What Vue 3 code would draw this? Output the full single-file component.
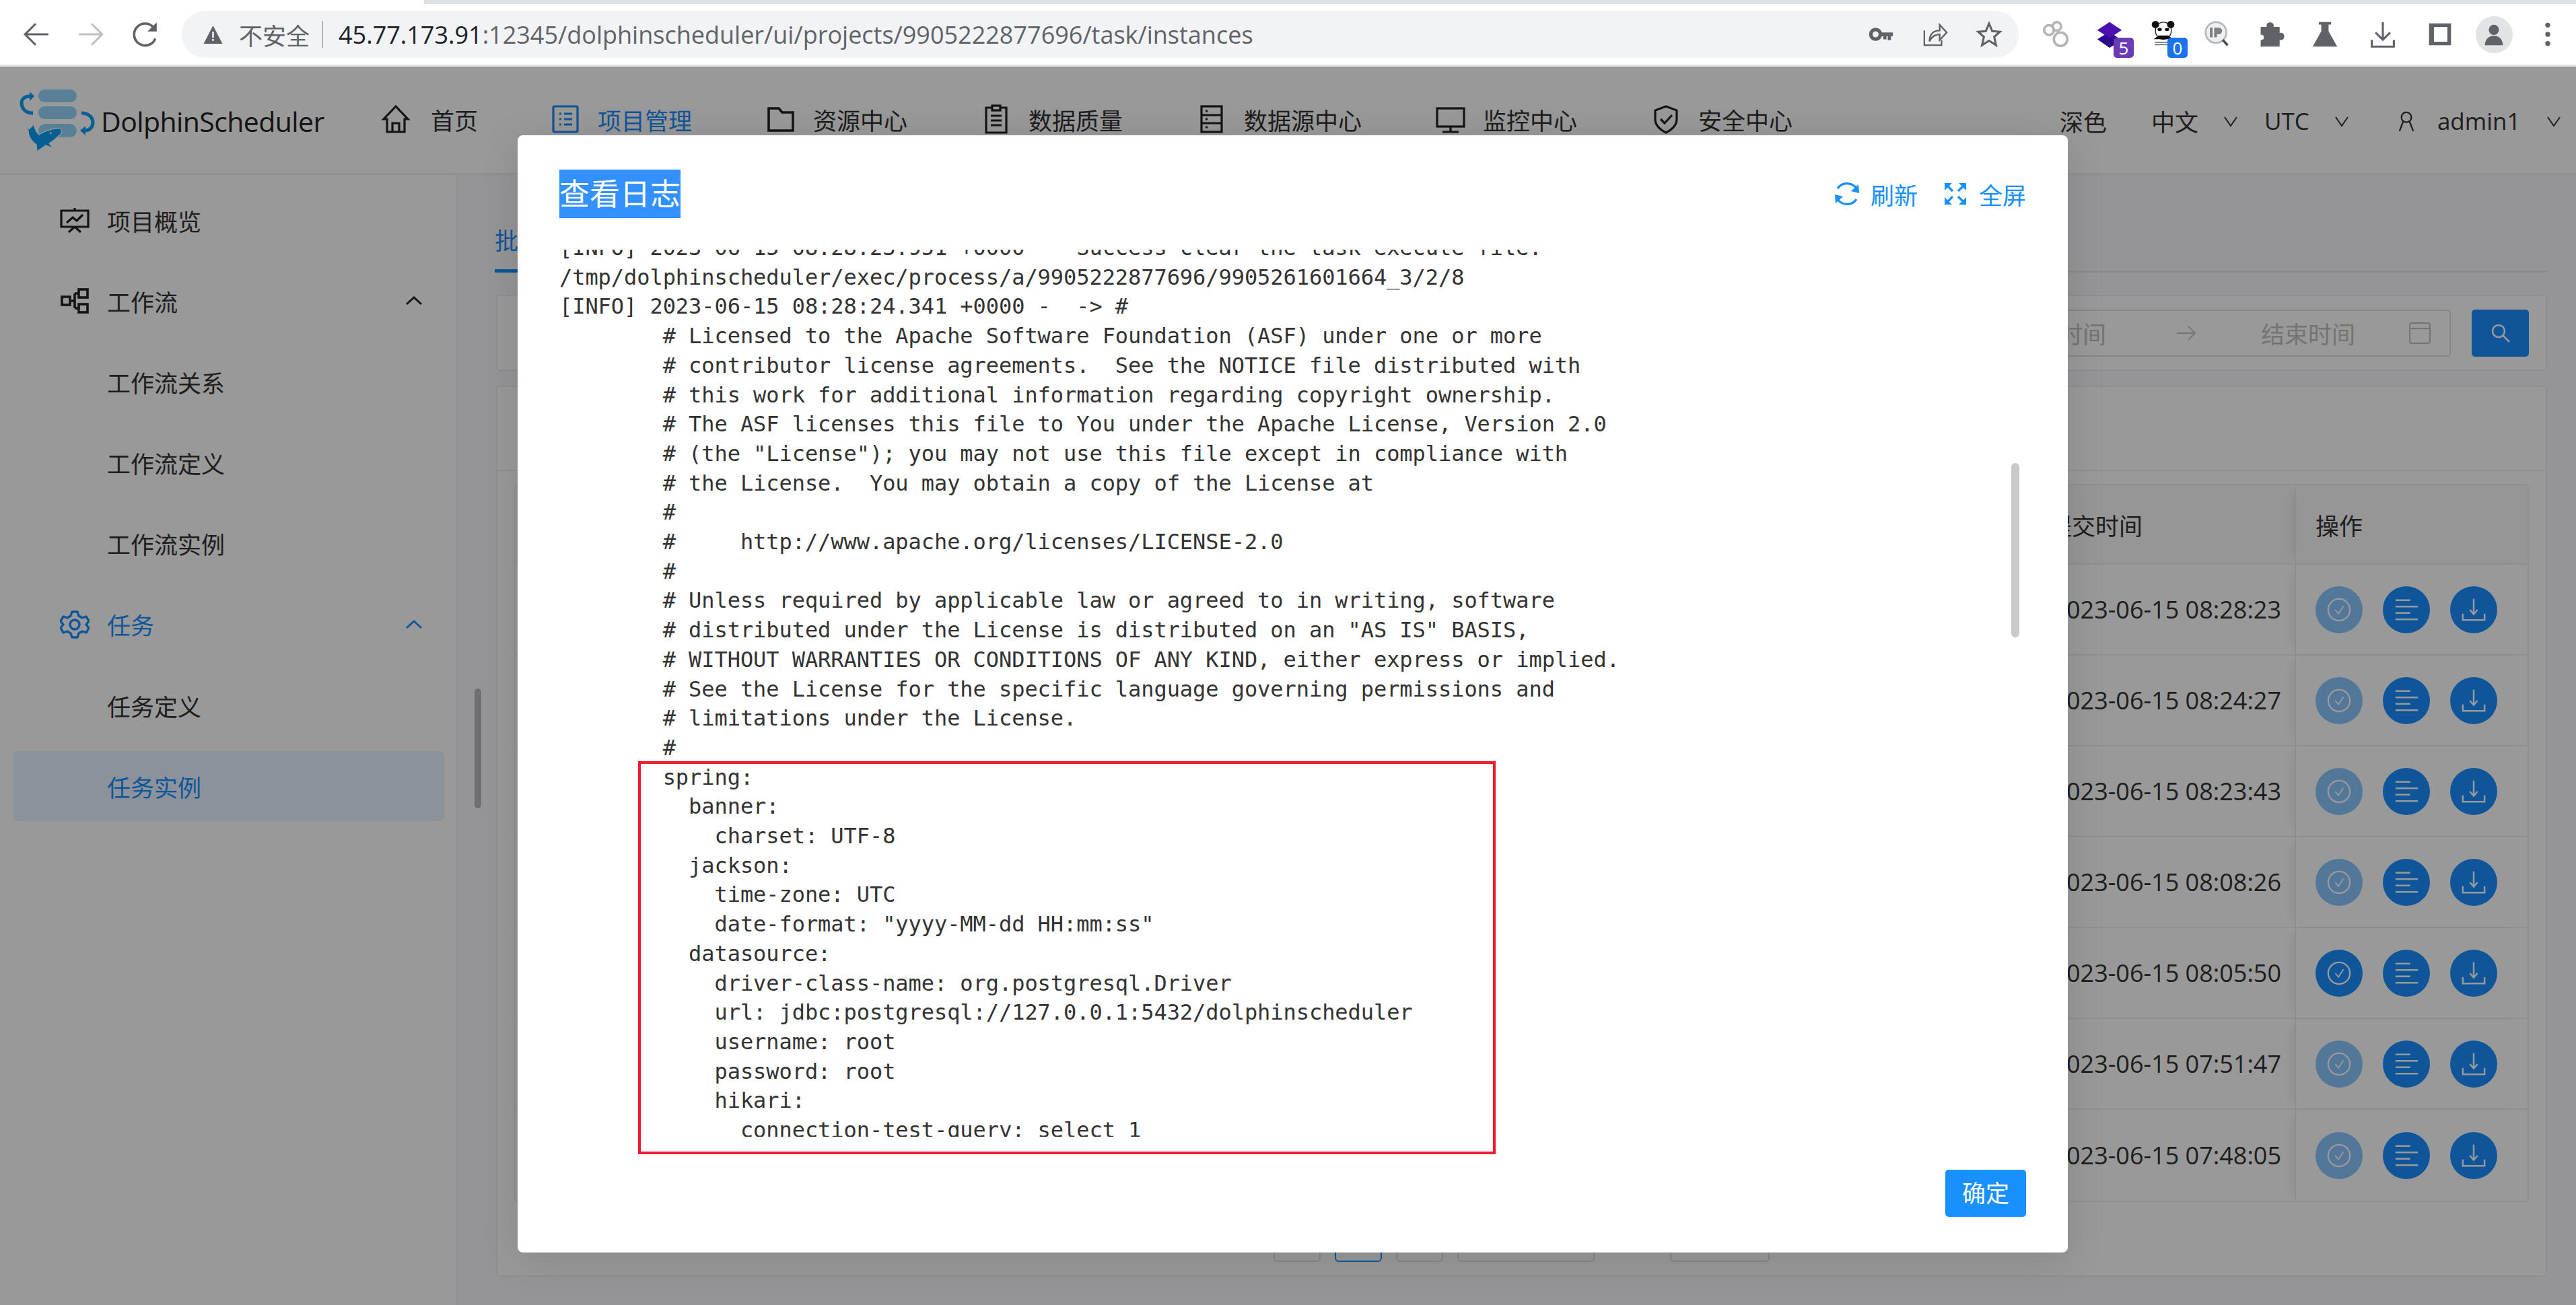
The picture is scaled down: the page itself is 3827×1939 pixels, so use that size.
<script setup>
const navItems = [
  { t: '首页', k: 'home' },
  { t: '项目管理', k: 'list', active: true },
  { t: '资源中心', k: 'folder' },
  { t: '数据质量', k: 'doc' },
  { t: '数据源中心', k: 'db' },
  { t: '监控中心', k: 'monitor' },
  { t: '安全中心', k: 'shield' }
]
const side = [
  { t: '项目概览', icon: 'chart' },
  { t: '工作流', icon: 'flow', arrow: true },
  { t: '工作流关系', sub: true },
  { t: '工作流定义', sub: true },
  { t: '工作流实例', sub: true },
  { t: '任务', icon: 'gear', arrow: true, blue: true },
  { t: '任务定义', sub: true },
  { t: '任务实例', sub: true, blue: true, sel: true }
]
const rows = [
  { time: '2023-06-15 08:28:23' },
  { time: '2023-06-15 08:24:27' },
  { time: '2023-06-15 08:23:43' },
  { time: '2023-06-15 08:08:26' },
  { time: '2023-06-15 08:05:50', on: true },
  { time: '2023-06-15 07:51:47' },
  { time: '2023-06-15 07:48:05' }
]
const log = [
  '[INFO] 2023-06-15 08:28:23.951 +0000 -  Success clear the task execute file:',
  '/tmp/dolphinscheduler/exec/process/a/9905222877696/9905261601664_3/2/8',
  '[INFO] 2023-06-15 08:28:24.341 +0000 -  -> #',
  '        # Licensed to the Apache Software Foundation (ASF) under one or more',
  '        # contributor license agreements.  See the NOTICE file distributed with',
  '        # this work for additional information regarding copyright ownership.',
  '        # The ASF licenses this file to You under the Apache License, Version 2.0',
  '        # (the "License"); you may not use this file except in compliance with',
  '        # the License.  You may obtain a copy of the License at',
  '        #',
  '        #     http://www.apache.org/licenses/LICENSE-2.0',
  '        #',
  '        # Unless required by applicable law or agreed to in writing, software',
  '        # distributed under the License is distributed on an "AS IS" BASIS,',
  '        # WITHOUT WARRANTIES OR CONDITIONS OF ANY KIND, either express or implied.',
  '        # See the License for the specific language governing permissions and',
  '        # limitations under the License.',
  '        #',
  '        spring:',
  '          banner:',
  '            charset: UTF-8',
  '          jackson:',
  '            time-zone: UTC',
  '            date-format: "yyyy-MM-dd HH:mm:ss"',
  '          datasource:',
  '            driver-class-name: org.postgresql.Driver',
  '            url: jdbc:postgresql://127.0.0.1:5432/dolphinscheduler',
  '            username: root',
  '            password: root',
  '            hikari:',
  '              connection-test-query: select 1'
].join('\n')
</script>

<template>
  <div class="screen">
    <div class="tabstrip"><div class="activetab"></div></div>
    <div class="toolbar">
      <svg class="tb" viewBox="0 0 40 40"><path d="M37 20H5M19 5 4 20l15 15" fill="none" stroke="#5f6368" stroke-width="3"/></svg>
      <svg class="tb" viewBox="0 0 40 40"><path d="M3 20h32M21 5l15 15-15 15" fill="none" stroke="#bdc1c6" stroke-width="3"/></svg>
      <svg class="tb" viewBox="0 0 40 40"><path d="M34 26a15.500 15.500 0 1 1-2-15" fill="none" stroke="#5f6368" stroke-width="3.400"/><path d="M36 3v13H23z" fill="#5f6368"/></svg>
      <div class="omni">
        <svg class="warn" viewBox="0 0 30 30"><path d="M15 2 29 29H1z" fill="#5f6368"/><path d="M13.700 11h2.600v9h-2.600zM13.700 22h2.600v2.800h-2.600z" fill="#f1f3f4"/></svg>
        <span class="insecure">不安全</span>
        <span class="sep"></span>
        <span class="url"><b>45.77.173.91</b>:12345/dolphinscheduler/ui/projects/9905222877696/task/instances</span>
        <span class="grow"></span>
        <svg class="om" viewBox="0 0 40 40"><circle cx="11" cy="20" r="7.500" fill="none" stroke="#5f6368" stroke-width="5.500"/><path d="M18 17h20v6h-3v6h-5v-6h-2v5h-5v-5h-5z" fill="#5f6368"/></svg>
        <svg class="om" viewBox="0 0 40 40"><path d="M3 14v23h27v-8M11 31c0-12 7-17 16-17V5l11 12-11 12v-9c-7 0-12 3-16 11z" fill="none" stroke="#5f6368" stroke-width="2.400"/></svg>
        <svg class="om" viewBox="0 0 40 40"><path d="m20 3 5 12 12 1-9 8 3 13-11-7-11 7 3-13-9-8 12-1z" fill="none" stroke="#5f6368" stroke-width="3.200"/></svg>
      </div>
      <div class="exts">
        <span class="cell"><svg class="ex" viewBox="0 0 44 44"><g fill="none" stroke="#b5b5b5" stroke-width="4"><circle cx="11" cy="15" r="8"/><circle cx="24" cy="9" r="7"/><circle cx="30" cy="30" r="11"/></g></svg></span>
        <span class="cell"><svg class="ex" viewBox="0 0 44 44"><path d="m22 18 20 14-20 12L2 30z" fill="#2b0a8c"/><path d="M22 2 42 15 22 28 2 15z" fill="#4a0fae"/></svg><i class="bdg bdg-p">5</i></span>
        <span class="cell"><svg class="ex" viewBox="0 0 44 44"><ellipse cx="22" cy="16" rx="13" ry="14" fill="#fff" stroke="#222" stroke-width="1.500"/><circle cx="9" cy="6" r="6" fill="#111"/><circle cx="34" cy="6" r="6" fill="#111"/><ellipse cx="16" cy="14" rx="3.500" ry="2.500" fill="#111"/><ellipse cx="28" cy="14" rx="3.500" ry="2.500" fill="#111"/><path d="M6 30 14 24h16l8 6z" fill="#111"/><path d="M8 34h24v2H8zM8 38h24v2H8z" fill="#777"/></svg><i class="bdg bdg-b">0</i></span>
        <span class="cell"><svg class="ex" viewBox="0 0 44 44"><circle cx="20" cy="19" r="17" fill="#eef0f2" stroke="#b5b8bc" stroke-width="3"/><path d="m31 31 8 9" stroke="#4a4d52" stroke-width="4"/><path d="M10 11h4.500v16H10zM17 11h7c8 0 8 11 0 11h-2.500v5H17z" fill="#7d8085"/></svg></span>
        <span class="cell"><svg class="ex" viewBox="0 0 44 44"><path d="M5 10h10c-3-10 14-10 11 0h10v10c10-3 10 14 0 11v11H5V31c7 2 7-10 0-8z" fill="#5f6368"/></svg></span>
        <span class="cell"><svg class="ex" viewBox="0 0 44 44"><path d="M12 2h20v4h-4v11l14 25H2l14-25V6h-4z" fill="#5f6368"/></svg></span>
        <span class="cell c-dl"><svg class="ex" viewBox="0 0 44 44"><path d="M22 2v28M10 19l12 12 12-12M4 31v11h36V31" fill="none" stroke="#5f6368" stroke-width="3.400"/></svg></span>
        <span class="cell c-sb"><svg class="ex" viewBox="0 0 44 44"><path d="M4 4h36v36H4z M12 10v24h22V10z" fill="#5f6368" fill-rule="evenodd"/></svg></span>
        <span class="cell"><span class="avatar"><svg viewBox="0 0 40 40"><circle cx="20" cy="13" r="8" fill="#5f6368"/><path d="M6 37c0-20 28-20 28 0z" fill="#5f6368"/></svg></span></span>
        <span class="cell"><svg class="ex" viewBox="0 0 44 44"><circle cx="22" cy="7" r="4" fill="#5f6368"/><circle cx="22" cy="22" r="4" fill="#5f6368"/><circle cx="22" cy="37" r="4" fill="#5f6368"/></svg></span>
      </div>
    </div>

    <div class="app">
      <header class="head">
        <div class="brand">
          <svg class="logo" viewBox="0 0 130 120">
            <rect x="37" y="15" width="57" height="19" rx="9.500" fill="#93d6fb"/>
            <rect x="37" y="40" width="57" height="19" rx="9.500" fill="#93d6fb"/>
            <rect x="37" y="66" width="57" height="20" rx="10" fill="#93d6fb"/>
            <path d="M29 50C15 50 12 40 12 35c0-6 5-10 13-10" fill="none" stroke="#08a0f5" stroke-width="5"/>
            <path d="m24 18 7 7-7 7z" fill="#08a0f5"/>
            <path d="M101 50c11 0 17 7 17 14s-5 12-12 12" fill="none" stroke="#08a0f5" stroke-width="5"/>
            <path d="m107 69-8 7 8 7z" fill="#08a0f5"/>
            <path d="m16 67 7 7 7-7c1 5 5 13 8 15 10-6 22-10 32-9l2 6c-7 8-14 13-19 16l6 7-11-4-13 9-1-10c-6-4-12-12-12-21-2-3-4-6-6-9z" fill="#08a0f5" stroke="#fff" stroke-width="1.200"/>
            <circle cx="55.500" cy="80" r="1.400" fill="#fff"/>
          </svg>
          <span class="brandname">DolphinScheduler</span>
        </div>
        <nav class="nav">
          <div v-for="n in navItems" :key="n.k" class="nav-item" :class="{ on: n.active, first: n.k === 'home' }">
            <svg class="nav-ic" viewBox="0 0 44 44">
              <path v-if="n.k === 'home'" d="M22 3 4 22h5v19h26V22h5zM17 41V28h10v13" fill="none" stroke="currentColor" stroke-width="3.200"/>
              <g v-else-if="n.k === 'list'" fill="none" stroke="currentColor" stroke-width="3.200"><rect x="4" y="3" width="36" height="38" rx="2"/><path d="M13 14h3M20 14h12M13 22h3M20 22h12M13 30h3M20 30h12"/></g>
              <path v-else-if="n.k === 'folder'" d="M4 6h15l5 6h16v27H4z" fill="none" stroke="currentColor" stroke-width="3.600"/>
              <g v-else-if="n.k === 'doc'" fill="none" stroke="currentColor" stroke-width="3.200"><path d="M16 5H7v37h30V5h-9"/><rect x="16" y="2" width="12" height="7"/><path d="M14 17h16M14 24h16M14 31h16"/></g>
              <g v-else-if="n.k === 'db'" fill="none" stroke="currentColor" stroke-width="3.200"><rect x="7" y="3" width="30" height="38"/><path d="M7 16h30M7 28h30M13 10h3M13 22h3M13 34h3"/></g>
              <g v-else-if="n.k === 'monitor'" fill="none" stroke="currentColor" stroke-width="3.200"><rect x="2" y="6" width="40" height="27"/><path d="M22 33v8M10 41h24"/></g>
              <g v-else fill="none" stroke="currentColor" stroke-width="3.200"><path d="M22 3 6 9v13c0 10 8 16 16 20 8-4 16-10 16-20V9z"/><path d="m14 22 6 6 11-12"/></g>
            </svg>
            <span>{{ n.t }}</span>
          </div>
        </nav>
        <div class="head-right">
          <span class="hr-a">深色</span>
          <span class="hr-b">中文</span><svg class="chev" viewBox="0 0 24 24"><path d="m3 6 9 13 9-13" fill="none" stroke="currentColor" stroke-width="2"/></svg>
          <span class="hr-c">UTC</span><svg class="chev" viewBox="0 0 24 24"><path d="m3 6 9 13 9-13" fill="none" stroke="currentColor" stroke-width="2"/></svg>
          <svg class="user" viewBox="0 0 24 30"><circle cx="12" cy="10" r="6.500" fill="none" stroke="currentColor" stroke-width="2"/><path d="M8 15 3 28M16 15l5 13" fill="none" stroke="currentColor" stroke-width="2"/></svg>
          <span class="hr-d">admin1</span><svg class="chev" viewBox="0 0 24 24"><path d="m3 6 9 13 9-13" fill="none" stroke="currentColor" stroke-width="2"/></svg>
        </div>
      </header>

      <div class="body">
        <aside class="side">
          <div class="side-list">
            <div v-for="s in side" :key="s.t" class="side-row" :class="{ hot: s.blue, sel: s.sel }">
              <svg v-if="s.icon" class="side-ic" viewBox="0 0 44 44">
                <g v-if="s.icon === 'chart'" fill="none" stroke="currentColor" stroke-width="3.200"><path d="M2 8h40v24H2zM22 4v4M22 32l-9 8M22 32l9 8"/><path d="m10 26 9-8 6 5 9-9"/></g>
                <g v-else-if="s.icon === 'flow'" fill="none" stroke="currentColor" stroke-width="3.600"><rect x="3" y="16" width="12" height="12"/><rect x="28" y="5" width="13" height="12"/><rect x="28" y="27" width="13" height="12"/><path d="M15 22h7M22 11v22M22 11h6M22 33h6"/></g>
                <g v-else fill="none" stroke="currentColor" stroke-width="3.400"><circle cx="22" cy="22" r="7"/><path d="M18 3h8l2 6 5 3 6-2 4 7-4 5 4 5-4 7-6-2-5 3-2 6h-8l-2-6-5-3-6 2-4-7 4-5-4-5 4-7 6 2 5-3z" stroke-linejoin="round"/></g>
              </svg>
              <span class="side-t">{{ s.t }}</span>
              <svg v-if="s.arrow" class="side-arr" viewBox="0 0 26 16"><path d="m2 13 11-10 11 10" fill="none" stroke="currentColor" stroke-width="3"/></svg>
            </div>
          </div>
          <div class="side-thumb"></div>
        </aside>

        <main class="main">
          <div class="tabs"><span class="tab">批量任务</span></div>
          <section class="card filter">
            <div class="picker">
              <span class="ph">开始时间</span>
              <svg class="arrow" viewBox="0 0 30 24"><path d="M1 12h27M18 2l10 10-10 10" fill="none" stroke="currentColor" stroke-width="1.800"/></svg>
              <span class="ph">结束时间</span>
              <svg class="cal" viewBox="0 0 32 32"><rect x="1" y="1" width="30" height="30" rx="3" fill="none" stroke="currentColor" stroke-width="2"/><path d="M1 9h30" stroke="currentColor" stroke-width="2"/></svg>
            </div>
            <div class="search"><svg viewBox="0 0 30 30"><circle cx="12" cy="12" r="9" fill="none" stroke="#fff" stroke-width="2.600"/><path d="m18 18 10 10" stroke="#fff" stroke-width="2.600"/></svg></div>
          </section>
          <section class="card listcard">
            <div class="card-head"></div>
            <div class="card-body">
              <div class="table">
                <div class="tr th">
                  <div class="c-time">提交时间</div>
                  <div class="c-op">操作</div>
                </div>
                <div v-for="r in rows" :key="r.time" class="tr">
                  <div class="c-time">{{ r.time }}</div>
                  <div class="c-op btns">
                    <span class="rb" :class="{ faded: !r.on }"><svg viewBox="0 0 40 40"><circle cx="20" cy="20" r="17" fill="none" stroke="#fff" stroke-width="2.400"/><path d="m14 20 5 6 8-12" fill="none" stroke="#fff" stroke-width="2"/></svg></span>
                    <span class="rb"><svg viewBox="0 0 40 40"><path d="M3 5h23M3 15h35M3 25h23M3 35h35" stroke="#fff" stroke-width="2.600"/></svg></span>
                    <span class="rb"><svg viewBox="0 0 40 40"><path d="M20 3v24M14 20l6 7 6-7M3 26v10h34V26" fill="none" stroke="#fff" stroke-width="2.600"/></svg></span>
                  </div>
                </div>
              </div>
              <div class="pager">
                <span class="pg"></span><span class="pg cur"></span><span class="pg"></span><span class="pg wide"></span><span class="pg med"></span>
              </div>
            </div>
          </section>
        </main>
      </div>
      <div class="backdrop"></div>
    </div>

    <div class="modal">
      <div class="m-head">
        <span class="m-title">查看日志</span>
        <div class="m-acts">
          <span class="m-act">
            <svg viewBox="0 0 40 40"><path d="M6 12A17 17 0 0 1 36 16M34 28A17 17 0 0 1 4 24" fill="none" stroke="currentColor" stroke-width="3.200"/><path d="m37 6 1 13-12-3zM3 34 2 21l12 3z" fill="currentColor"/></svg>
            刷新
          </span>
          <span class="m-act">
            <svg viewBox="0 0 40 40"><path d="M4 4h11L4 15zM36 4H25l11 11zM36 36H25l11-11zM4 36h11L4 25z" fill="currentColor"/><path d="m8 8 8 8M32 8l-8 8M32 32l-8-8M8 32l8-8" fill="none" stroke="currentColor" stroke-width="3.200"/></svg>
            全屏
          </span>
        </div>
      </div>
      <div class="m-log"><pre class="logtext">{{ log }}</pre><div class="log-thumb"></div></div>
      <div class="m-foot"><span class="ok">确定</span></div>
    </div>
    <div class="redbox"></div>
  </div>
</template>

<style>
html, body { margin: 0; padding: 0; background: #fff; overflow: hidden; }
</style>

<style scoped>
.screen { position: relative; width: 3827px; height: 1939px; overflow: hidden; font-family: "Open Sans", "Noto Sans CJK SC", sans-serif; color: #333; display: flex; flex-direction: column; }
.tabstrip { height: 6px; background: #dee1e6; flex: none; }
.activetab { width: 630px; height: 6px; background: #fff; }
.toolbar { height: 90px; flex: none; display: flex; align-items: center; background: #fff; border-bottom: 3px solid #e3e3e3; padding-left: 33px; }
.tb { width: 42px; height: 42px; margin-right: 39px; flex: none; }
.tb:nth-of-type(3) { margin-right: 33px; }
.omni { width: 2729px; height: 70px; border-radius: 35px; background: #f1f3f4; display: flex; align-items: center; padding: 0 24px 0 31px; box-sizing: border-box; flex: none; }
.warn { width: 31px; height: 30px; flex: none; }
.insecure { font-size: 35px; color: #5f6368; margin-left: 23px; }
.sep { width: 1px; height: 40px; background: #8a8d91; margin: 0 23px 0 19px; }
.url { font-size: 36px; color: #5f6368; white-space: nowrap; }
.url b { font-weight: 400; color: #202124; }
.grow { flex: 1; }
.om { width: 40px; height: 38px; margin-left: 40px; }
.exts { display: flex; align-items: center; margin-left: 15px; }
.cell { width: 80px; height: 60px; display: flex; align-items: center; justify-content: center; position: relative; flex: none; }
.c-dl { margin-left: 6px; }
.c-sb { margin-left: 5px; }
.ex { width: 40px; height: 40px; display: block; flex: none; }
.bdg { position: absolute; left: 46px; top: 35px; width: 30px; height: 30px; border-radius: 5px; font: 400 26px/30px "Open Sans", sans-serif; text-align: center; color: #fff; }
.bdg-p { background: #6a3ab8; }
.bdg-b { background: #1a73e8; }
.avatar { width: 55px; height: 55px; border-radius: 50%; background: #e1e3e6; display: flex; align-items: center; justify-content: center; }
.avatar svg { width: 38px; height: 38px; }

.app { position: relative; flex: 1; display: flex; flex-direction: column; min-height: 0; }
.backdrop { position: absolute; left: 0; top: 0; width: 100%; height: 100%; background: rgba(0, 0, 0, .4); z-index: 10; }
.head { height: 161px; flex: none; background: #fff; border-bottom: 3px solid #f0f0f0; box-sizing: border-box; display: flex; align-items: center; padding-left: 20px; position: relative; }
.brand { display: flex; align-items: center; width: 546px; flex: none; }
.logo { width: 130px; height: 120px; flex: none; }
.brandname { font-size: 41px; color: #222; font-family: "Open Sans", sans-serif; letter-spacing: -.6px; margin-top: 4px; }
.nav { display: flex; align-items: center; margin-top: -2px; }
.nav-item { display: flex; align-items: center; font-size: 35px; gap: 26px; margin-right: 110px; color: #333; }
.nav-item.first { gap: 30px; margin-right: 108px; }
.nav-item.on { color: #1890ff; }
.nav-ic { width: 44px; height: 44px; flex: none; color: #222; }
.on .nav-ic { color: #1890ff; }
.head-right { position: absolute; top: 0; left: 3060px; height: 161px; display: flex; align-items: center; font-size: 35px; }
.hr-a { margin-right: 66px; }
.chev { width: 24px; height: 24px; margin-left: 36px; flex: none; }
.hr-c { margin-left: 38px; }
.user { width: 28px; height: 34px; margin-left: 70px; flex: none; }
.hr-d { margin-left: 32px; }
.head-right .chev:last-child { margin-left: 38px; }

.body { flex: 1; display: flex; min-height: 0; }
.side { width: 678px; flex: none; background: #fff; border-right: 2px solid #eee; position: relative; }
.side-list { padding: 15px 18px 0 20px; }
.side-row { height: 104px; margin-bottom: 16.200px; display: flex; align-items: center; position: relative; border-radius: 8px; font-size: 35px; color: #333; }
.side-row.hot { color: #1890ff; }
.side-row.sel { background: #e8f4ff; }
.side-ic { position: absolute; left: 69px; width: 44px; height: 44px; color: #222; }
.hot .side-ic { color: #1890ff; }
.side-t { margin-left: 139px; }
.side-arr { position: absolute; left: 582px; width: 26px; height: 16px; color: #222; }
.hot .side-arr { color: #1890ff; }
.side-thumb { position: absolute; left: 705px; top: 763px; width: 10px; height: 178px; border-radius: 5px; background: #b9b9b9; }

.main { flex: 1; background: #f8f8fc; padding: 0 43px 0 57px; min-width: 0; box-sizing: border-box; display: flex; flex-direction: column; }
.tabs { height: 145px; flex: none; border-bottom: 3px solid #e8e8e8; box-sizing: border-box; position: relative; }
.tab { position: absolute; left: -2px; top: 70px; font-size: 35px; color: #1890ff; height: 75px; border-bottom: 5px solid #1890ff; white-space: nowrap; box-sizing: border-box; }
.card { background: #fff; border: 2px solid #efeff5; border-radius: 5px; box-sizing: border-box; }
.filter { margin-top: 33px; height: 113px; flex: none; display: flex; align-items: center; justify-content: flex-end; padding-right: 25px; gap: 31px; }
.picker { width: 920px; height: 70px; border: 2px solid #e0e0e6; border-radius: 5px; box-sizing: border-box; display: flex; align-items: center; justify-content: flex-end; font-size: 35px; padding-right: 28px; }
.ph { color: #c2c2c2; }
.arrow { width: 30px; height: 24px; color: #c2c2c2; margin: 0 96px 0 104px; flex: none; }
.cal { width: 32px; height: 32px; color: #c2c2c2; margin-left: 80px; flex: none; }
.search { width: 85px; height: 70px; background: #1890ff; border-radius: 5px; display: flex; align-items: center; justify-content: center; }
.search svg { width: 30px; height: 30px; }
.listcard { margin-top: 22px; height: 1324px; flex: none; }
.card-head { height: 123px; border-bottom: 2px solid #efeff5; }
.card-body { padding: 19px 25px 0; }
.table { border: 2px solid #efeff5; border-radius: 5px; box-sizing: border-box; height: 1067px; overflow: hidden; }
.tr { height: 135px; display: flex; border-bottom: 2px solid #efeff5; box-sizing: border-box; align-items: stretch; justify-content: flex-end; font-size: 36px; }
.tr:last-child { border-bottom: 0; }
.th { height: 118px; background: #fafafc; font-size: 35px; }
.c-time { width: 400px; display: flex; align-items: center; font-family: "Open Sans", sans-serif; padding-right: 21px; justify-content: flex-end; white-space: nowrap; box-sizing: border-box; }
.th .c-time { font-family: "Noto Sans CJK SC", sans-serif; padding-right: 227px; }
.c-op { width: 345px; border-left: 1px solid #e6e6ea; box-shadow: -12px 0 14px -10px rgba(0, 0, 0, .1); box-sizing: border-box; padding-left: 29px; display: flex; align-items: center; }
.btns { gap: 30px; }
.rb { width: 70px; height: 70px; border-radius: 50%; background: #1890ff; display: flex; align-items: center; justify-content: center; }
.rb svg { width: 38px; height: 38px; }
.rb.faded { background: #8bc7ff; }
.pager { display: flex; gap: 21px; margin-top: 19px; padding-left: 1128px; }
.pg { width: 70px; height: 70px; border: 2px solid #e0e0e6; border-radius: 6px; box-sizing: border-box; flex: none; }
.pg.cur { border-color: #1890ff; }
.pg.wide { width: 204px; }
.pg.med { width: 148px; margin-left: 91px; }

.modal { position: absolute; left: 769px; top: 201px; width: 2303px; height: 1660px; background: #fff; border-radius: 8px; box-shadow: 0 10px 60px rgba(0, 0, 0, .12); display: flex; flex-direction: column; box-sizing: border-box; padding: 0 62px; z-index: 20; }
.m-head { height: 170px; flex: none; display: flex; align-items: center; justify-content: space-between; padding-top: 4px; box-sizing: border-box; }
.m-title { background: #3390ff; color: #fff; font-size: 45px; line-height: 72px; height: 72px; }
.m-acts { display: flex; gap: 36px; }
.m-act { display: flex; align-items: center; gap: 15px; font-size: 35px; color: #1890ff; }
.m-act svg { width: 40px; height: 40px; }
.m-log { height: 1318px; flex: none; overflow: hidden; position: relative; }
.logtext { margin: -24px 0 0; font: 32px/43.700px "DejaVu Sans Mono", "Liberation Mono", monospace; letter-spacing: -.06px; color: #333; white-space: pre; }
.log-thumb { position: absolute; left: 2157px; top: 317px; width: 12px; height: 259px; border-radius: 6px; background: #c9c9c9; }
.m-foot { flex: 1; display: flex; justify-content: flex-end; align-items: flex-start; padding-top: 49px; }
.ok { width: 120px; height: 70px; line-height: 70px; text-align: center; background: #1890ff; color: #fff; font-size: 35px; border-radius: 5px; }
.redbox { position: absolute; left: 948px; top: 1131px; width: 1274px; height: 584px; border: 4px solid #ee1c2e; box-sizing: border-box; pointer-events: none; z-index: 21; }
</style>
